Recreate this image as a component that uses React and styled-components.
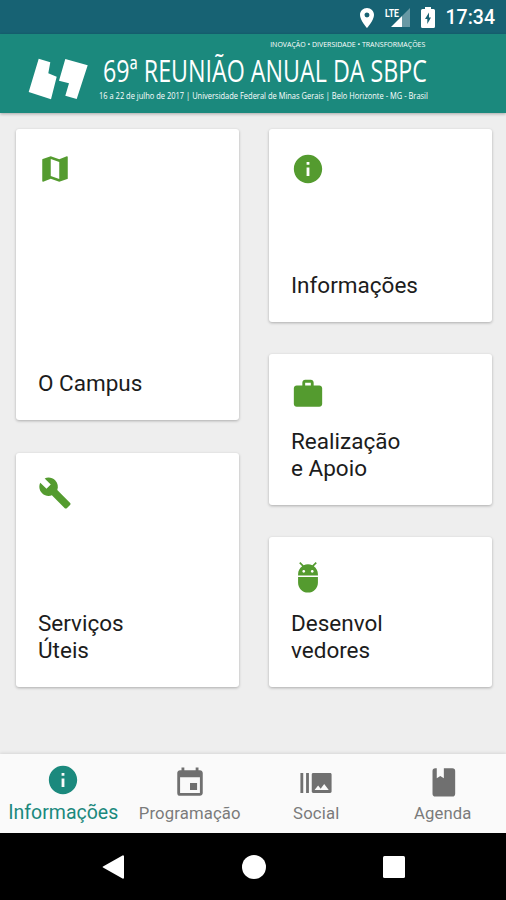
import styled, { createGlobalStyle } from 'styled-components';
import {
  MdAdb,
  MdBuild,
  MdBurstMode,
  MdEvent,
  MdInfo,
  MdLocationOn,
  MdMap,
  MdWork,
} from 'react-icons/md';

const GlobalStyle = createGlobalStyle`
  * {
    box-sizing: border-box;
  }

  body {
    margin: 0;
    font-family: Roboto, 'Liberation Sans', sans-serif;
    background: #eeeeee;
  }
`;

const Screen = styled.div`
  display: flex;
  flex-direction: column;
  width: 506px;
  height: 900px;
  overflow: hidden;
  background: #eeeeee;
`;

const StatusBar = styled.div`
  display: flex;
  flex: none;
  align-items: center;
  justify-content: flex-end;
  height: 34px;
  padding: 1px 11px 0 0;
  background: #176273;
  color: #ffffff;
`;

const Signal = styled.svg`
  margin: 0 10px 2px 6px;
  overflow: visible;
`;

const Clock = styled.span`
  margin-left: 11px;
  font-size: 19.5px;
  font-weight: 500;
  line-height: 34px;
`;

const Header = styled.header`
  display: flex;
  flex: none;
  height: 79px;
  padding: 0 79px 0 28px;
  background: #1b897d;
  color: #ffffff;
  box-shadow: 0 1px 3px rgba(0, 0, 0, 0.3);
`;

const Logo = styled.svg`
  flex: none;
  margin-top: 23px;
`;

const Banner = styled.div`
  display: flex;
  flex: 1;
  flex-direction: column;
  min-width: 0;
  padding: 5px 0 0 10px;
  font-family: 'Open Sans', 'Noto Sans', sans-serif;
  white-space: nowrap;
`;

const Squeezed = styled.div`
  width: max-content;
  font-size: ${(p) => p.$size}px;
  line-height: ${(p) => p.$line}px;
  transform: scaleX(${(p) => p.$scale});
  transform-origin: left;
`;

const Motto = styled(Squeezed)`
  align-self: flex-end;
  margin-right: 2px;
  transform-origin: right;
`;

const Title = styled(Squeezed)`
  margin-left: 4px;
`;

const Board = styled.main`
  display: grid;
  flex: 1;
  grid-template-columns: 223px 223px;
  column-gap: 30px;
  padding: 16px 0 0 16px;
`;

const Column = styled.div`
  display: flex;
  flex-direction: column;
  gap: ${(p) => p.$gap}px;
`;

const Card = styled.div`
  display: flex;
  flex-direction: column;
  justify-content: space-between;
  height: ${(p) => p.$height}px;
  padding: 23px 22px;
  background: #ffffff;
  border-radius: 3px;
  color: #549b2f;
  box-shadow: 0 1px 3px rgba(0, 0, 0, 0.28);
`;

const CardLabel = styled.div`
  font-size: 22.5px;
  line-height: 27px;
  color: #1c1c1c;
  white-space: pre-line;
`;

const TabBar = styled.nav`
  display: grid;
  flex: none;
  grid-template-columns: repeat(4, 1fr);
  height: 79px;
  background: #fafafa;
  box-shadow: 0 -1px 3px rgba(0, 0, 0, 0.1);
`;

const Tab = styled.div`
  display: flex;
  flex-direction: column;
  align-items: center;
  padding-top: ${(p) => (p.$active ? 9 : 12)}px;
  color: ${(p) => (p.$active ? '#1b897d' : '#707070')};
`;

const TabLabel = styled.span`
  margin-top: ${(p) => (p.$active ? 4 : 2)}px;
  font-size: ${(p) => (p.$active ? 19.5 : 16.7)}px;
  line-height: 24px;
  letter-spacing: ${(p) => (p.$active ? 0 : 0.15)}px;
  color: ${(p) => (p.$active ? '#1b897d' : '#7b7b7b')};
`;

const SystemBar = styled.div`
  display: flex;
  flex: none;
  align-items: center;
  justify-content: center;
  gap: 117px;
  height: 67px;
  background: #000000;
`;

const leftCards = [
  { label: 'O Campus', Icon: MdMap, height: 291 },
  { label: 'Serviços\nÚteis', Icon: MdBuild, height: 234 },
];

const rightCards = [
  { label: 'Informações', Icon: MdInfo, height: 193 },
  { label: 'Realização\ne Apoio', Icon: MdWork, height: 151 },
  { label: 'Desenvol\nvedores', Icon: MdAdb, height: 150 },
];

function BookIcon({ size }) {
  return (
    <svg width={size} height={size} viewBox="-0.6 0.4 24 24" fill="currentColor">
      <path d="M18 22a2 2 0 0 0 2-2V4a2 2 0 0 0-2-2h-6v7L9.500 7.500 7 9V2H6a2 2 0 0 0-2 2v16a2 2 0 0 0 2 2h12z" />
    </svg>
  );
}

const tabs = [
  { label: 'Informações', Icon: MdInfo, active: true },
  { label: 'Programação', Icon: MdEvent },
  { label: 'Social', Icon: MdBurstMode },
  { label: 'Agenda', Icon: BookIcon },
];

function CardColumn({ cards, gap }) {
  return (
    <Column $gap={gap}>
      {cards.map(({ label, Icon, height }) => (
        <Card key={label} $height={height}>
          <Icon size={34} />
          <CardLabel>{label}</CardLabel>
        </Card>
      ))}
    </Column>
  );
}

function App() {
  return (
    <>
      <GlobalStyle />
      <Screen>
        <StatusBar>
          <MdLocationOn size={24} />
          <Signal width="26" height="24" viewBox="0 -2 26 24" fill="#fff">
            <path d="M25 1v19h-8V9z" opacity="0.35" />
            <path d="M17 9v11H6z" />
            <text x="0" y="9.5" fontSize="11" fontWeight="700" textLength="14" lengthAdjust="spacingAndGlyphs">
              LTE
            </text>
          </Signal>
          <svg width="14" height="21" viewBox="0 0 14 21" fill="#fff">
            <path
              fillRule="evenodd"
              d="M4 0h6v2h2.500A1.500 1.500 0 0 1 14 3.500v16a1.500 1.500 0 0 1-1.500 1.500h-11A1.500 1.500 0 0 1 0 19.500v-16A1.500 1.500 0 0 1 1.500 2H4zM8 5.500l-4 6.500h2.300v5L10 10.500H8z"
            />
          </svg>
          <Clock>17:34</Clock>
        </StatusBar>

        <Header>
          <Logo width="61" height="45" viewBox="0 0 61 45" fill="#fff">
            <path d="M10.700 1.700L22.300 5.300 20.300 16.300 28.700 19.700 23 42.300.700 35z" />
            <path d="M37.300 2L59.700 8.300 48.700 42 37.300 38.700 41 26.300 31 23.700z" />
          </Logo>
          <Banner>
            <Motto $size={8} $line={10} $scale={0.875}>
              INOVAÇÃO • DIVERSIDADE • TRANSFORMAÇÕES
            </Motto>
            <Title $size={31.5} $line={42} $scale={0.738}>
              69ª REUNIÃO ANUAL DA SBPC
            </Title>
            <Squeezed $size={9} $line={10} $scale={0.832}>
              16 a 22 de julho de 2017 | Universidade Federal de Minas Gerais | Belo Horizonte - MG - Brasil
            </Squeezed>
          </Banner>
        </Header>

        <Board>
          <CardColumn cards={leftCards} gap={33} />
          <CardColumn cards={rightCards} gap={32} />
        </Board>

        <TabBar>
          {tabs.map(({ label, Icon, active }) => (
            <Tab key={label} $active={active}>
              <Icon size={34} />
              <TabLabel $active={active}>{label}</TabLabel>
            </Tab>
          ))}
        </TabBar>

        <SystemBar>
          <svg width="23" height="24" viewBox="0 0 23 24" fill="#fff">
            <path d="M20.500.500A1 1 0 0 1 22 1.500v21a1 1 0 0 1-1.500 1L1 12.600a.700.700 0 0 1 0-1.200z" />
          </svg>
          <svg width="24" height="24" viewBox="0 0 24 24" fill="#fff">
            <circle cx="12" cy="12" r="12" />
          </svg>
          <svg width="22" height="22" viewBox="0 0 22 22" fill="#fff">
            <rect width="22" height="22" rx="1.500" />
          </svg>
        </SystemBar>
      </Screen>
    </>
  );
}

export default App;
